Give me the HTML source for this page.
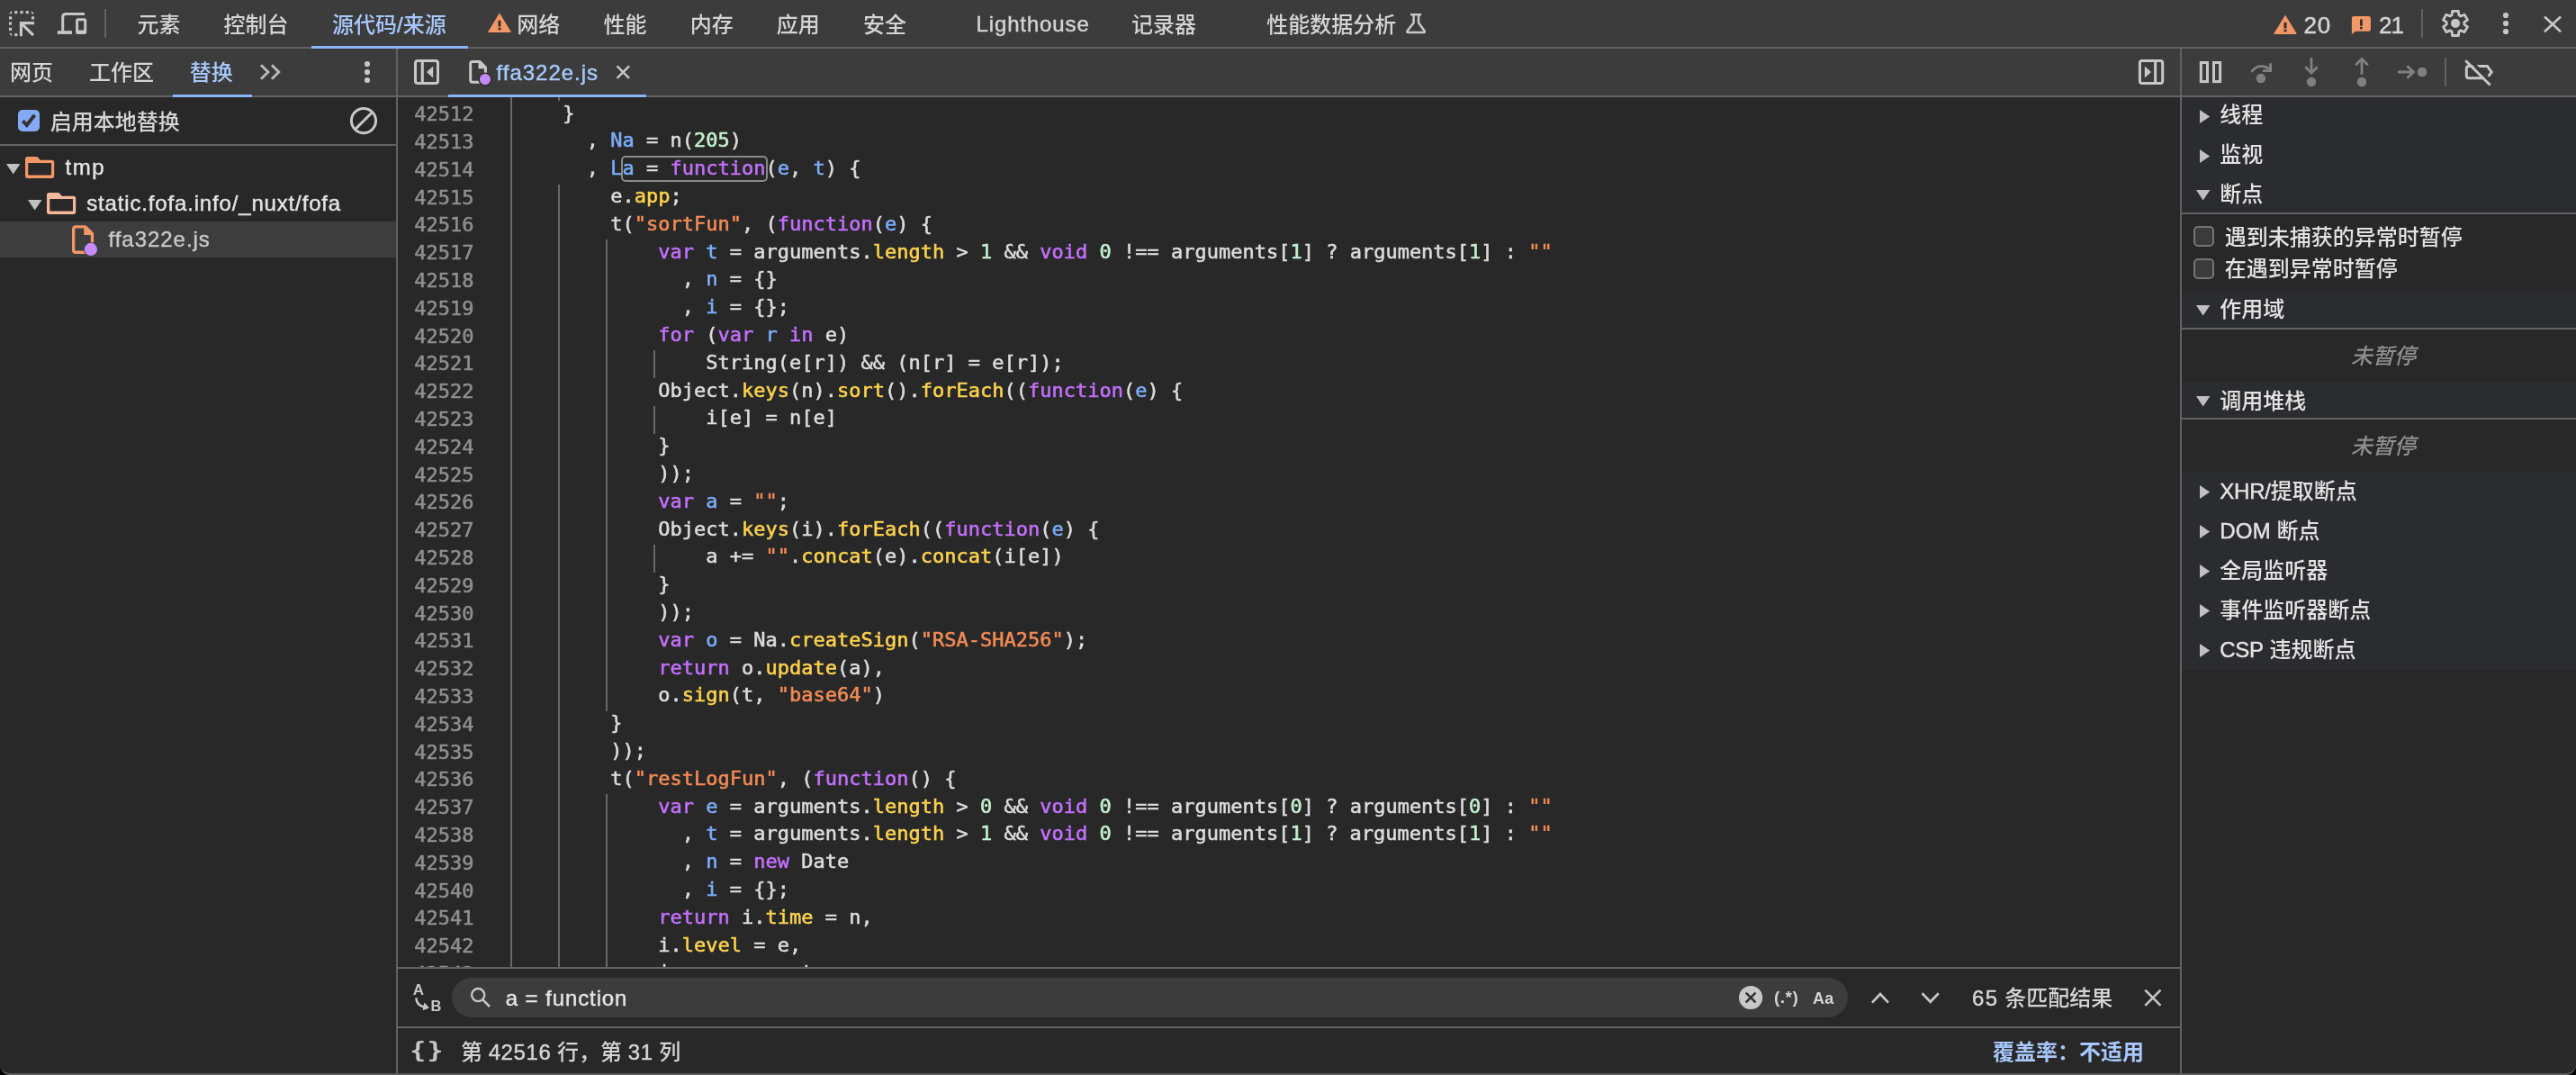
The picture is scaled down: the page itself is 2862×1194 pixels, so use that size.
<!DOCTYPE html>
<html lang="zh-CN">
<head>
<meta charset="utf-8">
<title>DevTools</title>
<style>
html,body{margin:0;padding:0;background:#000;}
body{width:2862px;height:1194px;overflow:hidden;position:relative;
  font-family:"Liberation Sans","Noto Sans CJK SC",sans-serif;font-size:24px;font-weight:500;color:#e3e3e3;
  -webkit-font-smoothing:antialiased;}
#app{will-change:transform;position:absolute;left:0;top:0;width:2862px;height:1192px;background:#282828;overflow:hidden;
  border-bottom:2px solid #5a5a5a;border-radius:0 0 11px 11px;}
.abs{position:absolute;}
.t{position:absolute;white-space:pre;line-height:32px;height:32px;}
.sub{color:#d4d4d4;}
.blue{color:#a8c7fa;}
.lat{letter-spacing:0.75px;-webkit-text-stroke:0.45px;}
.bar{position:absolute;left:0;width:2862px;background:#3c3c3c;}
.hl{position:absolute;height:2px;background:#626262;}
.vl{position:absolute;width:2px;background:#626262;}
.ul{position:absolute;background:#8ab4f8;height:3px;}
svg{position:absolute;overflow:visible;}
/* code */
#ed{position:absolute;left:442px;top:108px;width:1980px;height:966px;overflow:hidden;background:#282828;}
#edin{position:absolute;left:-442px;top:-108px;width:2862px;height:1194px;
  font-family:"DejaVu Sans Mono","Liberation Mono",monospace;font-size:22px;line-height:30.8px;font-weight:400;-webkit-text-stroke:0.55px;}
.ln{position:absolute;left:442px;width:84.5px;text-align:right;color:#8f8f8f;height:30.8px;white-space:pre;}
.cl{position:absolute;left:572.4px;height:30.8px;white-space:pre;color:#dcdcdc;}
.g{position:absolute;width:2px;height:30.8px;background:#686868;}
.k{color:#c270fb;}
.d{color:#7cacf8;}
.p{color:#fcd24c;}
.s{color:#f28b54;}
.n{color:#c4eed0;}
#gut{position:absolute;left:567px;top:108px;width:2px;height:966px;background:#686868;}
#match{position:absolute;left:689.6px;top:173px;width:159px;height:25px;border:2px solid #8a8a8a;border-radius:5px;}
/* right panel */
.hdr{position:absolute;left:2424px;width:438px;background:#2b2c2f;}
</style>
</head>
<body>
<div id="app">
<div class="bar" style="top:0;height:52px"></div>
<div class="hl" style="left:0;top:52px;width:2862px"></div>
<div class="bar" style="top:54px;height:52px"></div>
<div class="hl" style="left:0;top:106px;width:2862px"></div>
<svg style="left:8px;top:10px" width="32" height="32" viewBox="8 10 32 32" ><g fill="#c7c7c7"><path d="M13.1 12.1V15.2H10.0Z"/><rect x="16.25" y="12.10" width="3.1" height="3.1"/><rect x="22.50" y="12.10" width="3.1" height="3.1"/><rect x="28.75" y="12.10" width="3.1" height="3.1"/><path d="M35.0 12.1V15.2H38.1Z"/><rect x="10.00" y="18.35" width="3.1" height="3.1"/><rect x="10.00" y="24.60" width="3.1" height="3.1"/><rect x="10.00" y="30.85" width="3.1" height="3.1"/><path d="M10.0 37.1H13.1V40.2Z"/><rect x="35.00" y="18.35" width="3.1" height="3.1"/><rect x="16.25" y="37.10" width="3.1" height="3.1"/></g><path d="M38.1 25.6H23.4V40.2" fill="none" stroke="#c7c7c7" stroke-width="3.1"/><path d="M23.6 25.8L37 39.2" fill="none" stroke="#c7c7c7" stroke-width="3.1"/></svg>
<svg style="left:62px;top:12px" width="36" height="28" viewBox="62 12 36 28" ><path d="M94 15.5H73.2Q69.7 15.5 69.7 19V34.5" fill="none" stroke="#c7c7c7" stroke-width="3"/><rect x="63.9" y="34.2" width="16.1" height="3.7" fill="#c7c7c7"/><path d="M86.6 20.2H93.7Q96.2 20.2 96.2 22.7V35.6Q96.2 38.1 93.7 38.1H86.6Q84.1 38.1 84.1 35.6V22.7Q84.1 20.2 86.6 20.2ZM87.1 23.3V33.6H93.2V23.3Z" fill="#c7c7c7" fill-rule="evenodd"/></svg>
<div class="vl" style="left:116px;top:10px;height:32px"></div>
<div class="t sub" style="left:152.5px;top:11.7px;">元素</div>
<div class="t sub" style="left:248.5px;top:11.7px;">控制台</div>
<div class="t blue" style="left:369px;top:11.7px;">源代码<span class="lat" style="letter-spacing:0px">/</span>来源</div>
<div class="ul" style="left:346px;top:51px;width:174px"></div>
<svg style="left:540px;top:12px" width="30" height="28" viewBox="540 12 30 28" ><path d="M555 15.6L567.2 35.5H542.8Z" fill="#f29766" stroke="#f29766" stroke-width="1.2" stroke-linejoin="round"/><rect x="553.5" y="22.76" width="3" height="6.77" fill="#3a3030"/><rect x="553.5" y="30.72" width="3" height="2.7" fill="#3a3030"/></svg>
<div class="t sub" style="left:574.3px;top:11.7px;">网络</div>
<div class="t sub" style="left:670.5px;top:11.7px;">性能</div>
<div class="t sub" style="left:766.8px;top:11.7px;">内存</div>
<div class="t sub" style="left:862.7px;top:11.7px;">应用</div>
<div class="t sub" style="left:959px;top:11.7px;">安全</div>
<div class="t sub" style="left:1084.5px;top:10.7px;"><span class="lat" style="letter-spacing:0.87px">Lighthouse</span></div>
<div class="t sub" style="left:1257px;top:11.7px;">记录器</div>
<div class="t sub" style="left:1407.3px;top:11.7px;">性能数据分析</div>
<svg style="left:1560px;top:12px" width="26" height="28" viewBox="1560 12 26 28" ><path d="M1567 16.2H1579.1" fill="none" stroke="#c7c7c7" stroke-width="2.5"/><path d="M1570.6 16.5V25.2L1563.6 34.3Q1562.4 36.1 1564.6 36.1H1581.5Q1583.7 36.1 1582.5 34.3L1576.1 25.2V16.5" fill="none" stroke="#c7c7c7" stroke-width="2.5" stroke-linejoin="round"/></svg>
<svg style="left:2524px;top:14px" width="30" height="28" viewBox="2524 14 30 28" ><path d="M2539 17.7L2551 37.4H2527Z" fill="#f29766" stroke="#f29766" stroke-width="1.2" stroke-linejoin="round"/><rect x="2537.5" y="24.79" width="3" height="6.70" fill="#3a3030"/><rect x="2537.5" y="32.67" width="3" height="2.7" fill="#3a3030"/></svg>
<div class="t sub" style="left:2559.6px;top:11.9px;font-size:26px"><span class="lat" style="letter-spacing:0.6px">20</span></div>
<svg style="left:2610px;top:16px" width="26" height="24" viewBox="2610 16 26 24" ><path d="M2615.2 18H2631.6Q2633.9 18 2633.9 20.3V32.4Q2633.9 34.7 2631.6 34.7H2617L2612.9 38.2V20.3Q2612.9 18 2615.2 18Z" fill="#f29766"/><rect x="2622" y="21.4" width="2.8" height="7.4" fill="#3a3030"/><rect x="2622" y="29.9" width="2.8" height="2.4" fill="#3a3030"/></svg>
<div class="t sub" style="left:2643px;top:11.9px;font-size:26px"><span class="lat" style="letter-spacing:-1px">21</span></div>
<div class="vl" style="left:2690px;top:10px;height:32px"></div>
<svg style="left:2710px;top:8px" width="36" height="36" viewBox="2710 8 36 36" ><path d="M2731.87 16.79L2731.39 12.32L2724.61 12.32L2724.13 16.79L2722.04 17.99L2717.93 16.17L2714.54 22.04L2718.17 24.69L2718.17 27.11L2714.54 29.76L2717.93 35.63L2722.04 33.81L2724.13 35.01L2724.61 39.48L2731.39 39.48L2731.87 35.01L2733.96 33.81L2738.07 35.63L2741.46 29.76L2737.83 27.11L2737.83 24.69L2741.46 22.04L2738.07 16.17L2733.96 17.99Z" fill="none" stroke="#c7c7c7" stroke-width="2.8" stroke-linejoin="round"/><circle cx="2728" cy="25.9" r="5" fill="#c7c7c7"/></svg>
<svg style="left:2778px;top:12px" width="12" height="28" viewBox="2778 12 12 28" ><circle cx="2784" cy="17" r="3.1" fill="#c7c7c7"/><circle cx="2784" cy="26" r="3.1" fill="#c7c7c7"/><circle cx="2784" cy="35" r="3.1" fill="#c7c7c7"/></svg>
<svg style="left:2822px;top:14px" width="28" height="26" viewBox="2822 14 28 26" ><path d="M2827 18.5L2845 35.3M2845 18.5L2827 35.3" stroke="#c7c7c7" stroke-width="2.6" fill="none"/></svg>
<div class="t sub" style="left:11px;top:64.7px;">网页</div>
<div class="t sub" style="left:99px;top:64.7px;">工作区</div>
<div class="t blue" style="left:210.7px;top:64.7px;">替换</div>
<div class="ul" style="left:192px;top:105px;width:88px"></div>
<svg style="left:286px;top:68px" width="28" height="24" viewBox="286 68 28 24" ><path d="M290 72.2L297.9 80L290 87.8M301.9 72.2L309.8 80L301.9 87.8" fill="none" stroke="#bdbdbd" stroke-width="2.8"/></svg>
<svg style="left:402px;top:66px" width="12" height="28" viewBox="402 66 12 28" ><circle cx="408" cy="71.1" r="3.1" fill="#c7c7c7"/><circle cx="408" cy="80.1" r="3.1" fill="#c7c7c7"/><circle cx="408" cy="89" r="3.1" fill="#c7c7c7"/></svg>
<svg style="left:458px;top:64px" width="32" height="32" viewBox="458 64 32 32" ><rect x="461.5" y="67.4" width="25" height="25.1" rx="2.6" fill="none" stroke="#c7c7c7" stroke-width="3"/><rect x="467.7" y="67" width="3.1" height="26" fill="#c7c7c7"/><path d="M474 80L481.2 73.6V86.5Z" fill="#c7c7c7"/></svg>
<svg style="left:519px;top:64px" width="30" height="34" viewBox="519 64 30 34" ><path d="M533.0000000000001 68.4H524.9000000000001Q522.7 68.4 522.7 70.60000000000001V89.10000000000001Q522.7 91.30000000000001 524.9000000000001 91.30000000000001H537.2Q539.4000000000001 91.30000000000001 539.4000000000001 89.10000000000001V74.80000000000001Z" fill="none" stroke="#c7c7c7" stroke-width="3.0" stroke-linejoin="round"/><path d="M531.5000000000001 67.30000000000001L540.5000000000001 76.30000000000001H531.5000000000001Z" fill="#c7c7c7"/><circle cx="539" cy="88.1" r="7.7" fill="#2e2e2e"/><circle cx="539" cy="88.1" r="6.1" fill="#c58af9"/></svg>
<div class="t blue" style="left:551.6px;top:64.7px;"><span class="lat" style="letter-spacing:0.97px">ffa322e.js</span></div>
<svg style="left:682px;top:70px" width="22" height="22" viewBox="682 70 22 22" ><path d="M685.5999999999999 73.39999999999999L699.0 86.8M699.0 73.39999999999999L685.5999999999999 86.8" stroke="#c7c7c7" stroke-width="2.5" fill="none"/></svg>
<div class="ul" style="left:498px;top:105px;width:219.5px"></div>
<svg style="left:2374px;top:64px" width="32" height="32" viewBox="2374 64 32 32" ><rect x="2377.4" y="67.4" width="25.3" height="25.1" rx="2.6" fill="none" stroke="#c7c7c7" stroke-width="3"/><rect x="2393.1" y="67" width="3.1" height="26" fill="#c7c7c7"/><path d="M2390 80L2382.8 73.6V86.5Z" fill="#c7c7c7"/></svg>
<svg style="left:2442px;top:66px" width="28" height="28" viewBox="2442 66 28 28" ><rect x="2445.3" y="69.5" width="7.2" height="21.1" fill="none" stroke="#c7c7c7" stroke-width="3"/><rect x="2459.5" y="69.5" width="7.1" height="21.1" fill="none" stroke="#c7c7c7" stroke-width="3"/></svg>
<svg style="left:2498px;top:66px" width="28" height="28" viewBox="2498 66 28 28" ><path d="M2501.6 80A12.8 12.8 0 0 1 2522 77.6" fill="none" stroke="#808080" stroke-width="2.8"/><path d="M2522.6 70.2V78.6H2514" fill="none" stroke="#808080" stroke-width="2.8"/><circle cx="2511.9" cy="87" r="5.2" fill="#808080"/></svg>
<svg style="left:2558px;top:62px" width="20" height="36" viewBox="2558 62 20 36" ><path d="M2568 64.1V81M2561.3 74.3L2568 81L2574.7 74.3" fill="none" stroke="#808080" stroke-width="2.8"/><circle cx="2568" cy="91" r="5.2" fill="#808080"/></svg>
<svg style="left:2614px;top:62px" width="20" height="36" viewBox="2614 62 20 36" ><path d="M2624 82.7V65.6M2617.2 72.3L2624 65.5L2630.8 72.3" fill="none" stroke="#808080" stroke-width="2.8"/><circle cx="2624" cy="91" r="5.2" fill="#808080"/></svg>
<svg style="left:2662px;top:70px" width="36" height="20" viewBox="2662 70 36 20" ><path d="M2664 80H2681.5M2674.4 73.4L2681.5 80L2674.4 86.6" fill="none" stroke="#808080" stroke-width="2.8"/><circle cx="2691" cy="80" r="5.2" fill="#808080"/></svg>
<div class="vl" style="left:2716px;top:64px;height:32px"></div>
<svg style="left:2736px;top:64px" width="36" height="34" viewBox="2736 64 36 34" ><path d="M2744 73.4H2763.4L2768.2 80L2763.8 85.8" fill="none" stroke="#c7c7c7" stroke-width="3"/><path d="M2746 73.4H2743Q2740.3 73.4 2740.3 76.1V84Q2740.3 86.7 2743 86.7H2760" fill="none" stroke="#c7c7c7" stroke-width="3"/><path d="M2742.2 64.9L2769.8 92.5" stroke="#3c3c3c" stroke-width="3.6" fill="none"/><path d="M2739.3 67.2L2766.6 94.5" stroke="#c7c7c7" stroke-width="3" fill="none"/></svg>
<div class="vl" style="left:440px;top:54px;height:1138px"></div>
<div class="vl" style="left:2422px;top:54px;height:1138px"></div>
<div class="abs" style="left:20px;top:122px;width:24px;height:24px;border-radius:5px;background:#84aaf5"></div>
<svg style="left:20px;top:122px" width="24" height="24" viewBox="20 122 24 24" ><path d="M25.3 134.3L29.8 138.9L38.5 127.8" fill="none" stroke="#333" stroke-width="4"/></svg>
<div class="t sub" style="left:55.7px;top:119.7px;">启用本地替换</div>
<svg style="left:388px;top:118px" width="32" height="32" viewBox="388 118 32 32" ><circle cx="404" cy="134.1" r="13.6" fill="none" stroke="#c7c7c7" stroke-width="3"/><path d="M394.6 143.6L413.5 124.7" stroke="#c7c7c7" stroke-width="3"/></svg>
<div class="hl" style="left:0;top:160px;width:440px"></div>
<svg style="left:7.4px;top:181.5px" width="16" height="12" viewBox="0 0 16 12"><path d="M0 0H15.4L7.7 11.4Z" fill="#c0c0c0"/></svg>
<svg style="left:28px;top:174px" width="33" height="25" viewBox="0 0 33 25"><path d="M2.6 0H12.4Q13.6 0 14.4 0.9L16.8 3.7H29.6Q32.2 3.7 32.2 6.3V21.3Q32.2 23.9 29.6 23.9H2.6Q0 23.9 0 21.3V2.6Q0 0 2.6 0ZM3.3 7V20.6H29V7Z" fill="#f29766" fill-rule="evenodd"/></svg>
<div class="t " style="left:72.6px;top:170.2px;"><span class="lat" style="letter-spacing:1.5px">tmp</span></div>
<svg style="left:31.3px;top:221.5px" width="16" height="12" viewBox="0 0 16 12"><path d="M0 0H15.4L7.7 11.4Z" fill="#c0c0c0"/></svg>
<svg style="left:52px;top:214px" width="33" height="25" viewBox="0 0 33 25"><path d="M2.6 0H12.4Q13.6 0 14.4 0.9L16.8 3.7H29.6Q32.2 3.7 32.2 6.3V21.3Q32.2 23.9 29.6 23.9H2.6Q0 23.9 0 21.3V2.6Q0 0 2.6 0ZM3.3 7V20.6H29V7Z" fill="#f5b89b" fill-rule="evenodd"/></svg>
<div class="t " style="left:96.2px;top:210.0px;"><span class="lat" style="letter-spacing:0.84px">static.fofa.info/_nuxt/fofa</span></div>
<div class="abs" style="left:0;top:246px;width:440px;height:40px;background:#3d3d3d"></div>
<svg style="left:78px;top:248px" width="32" height="38" viewBox="78 248 32 38" ><path d="M94.85 251.85H84.25Q81.65 251.85 81.65 254.45V277.65Q81.65 280.25 84.25 280.25H99.85Q102.44999999999999 280.25 102.44999999999999 277.65V259.45Z" fill="none" stroke="#f29766" stroke-width="3.3" stroke-linejoin="round"/><path d="M93.19999999999999 250.6L103.69999999999999 261.09999999999997H93.19999999999999Z" fill="#f29766"/><circle cx="100.9" cy="276.9" r="8" fill="#3d3d3d"/><circle cx="100.9" cy="276.9" r="7.1" fill="#c58af9"/></svg>
<div class="t " style="left:120.5px;top:249.7px;color:#c7c7c7"><span class="lat" style="letter-spacing:0.97px">ffa322e.js</span></div>
<div id="ed"><div id="edin">
<i class="g" style="left:619.98px;top:81.45px"></i>
<i class="g" style="left:619.98px;top:204.65px"></i>
<i class="g" style="left:619.98px;top:235.45px"></i>
<i class="g" style="left:619.98px;top:266.25px"></i>
<i class="g" style="left:672.96px;top:266.25px"></i>
<i class="g" style="left:619.98px;top:297.05px"></i>
<i class="g" style="left:672.96px;top:297.05px"></i>
<i class="g" style="left:619.98px;top:327.85px"></i>
<i class="g" style="left:672.96px;top:327.85px"></i>
<i class="g" style="left:619.98px;top:358.65px"></i>
<i class="g" style="left:672.96px;top:358.65px"></i>
<i class="g" style="left:619.98px;top:389.45px"></i>
<i class="g" style="left:672.96px;top:389.45px"></i>
<i class="g" style="left:725.94px;top:389.45px"></i>
<i class="g" style="left:619.98px;top:420.25px"></i>
<i class="g" style="left:672.96px;top:420.25px"></i>
<i class="g" style="left:619.98px;top:451.05px"></i>
<i class="g" style="left:672.96px;top:451.05px"></i>
<i class="g" style="left:725.94px;top:451.05px"></i>
<i class="g" style="left:619.98px;top:481.85px"></i>
<i class="g" style="left:672.96px;top:481.85px"></i>
<i class="g" style="left:619.98px;top:512.65px"></i>
<i class="g" style="left:672.96px;top:512.65px"></i>
<i class="g" style="left:619.98px;top:543.45px"></i>
<i class="g" style="left:672.96px;top:543.45px"></i>
<i class="g" style="left:619.98px;top:574.25px"></i>
<i class="g" style="left:672.96px;top:574.25px"></i>
<i class="g" style="left:619.98px;top:605.05px"></i>
<i class="g" style="left:672.96px;top:605.05px"></i>
<i class="g" style="left:725.94px;top:605.05px"></i>
<i class="g" style="left:619.98px;top:635.85px"></i>
<i class="g" style="left:672.96px;top:635.85px"></i>
<i class="g" style="left:619.98px;top:666.65px"></i>
<i class="g" style="left:672.96px;top:666.65px"></i>
<i class="g" style="left:619.98px;top:697.45px"></i>
<i class="g" style="left:672.96px;top:697.45px"></i>
<i class="g" style="left:619.98px;top:728.25px"></i>
<i class="g" style="left:672.96px;top:728.25px"></i>
<i class="g" style="left:619.98px;top:759.05px"></i>
<i class="g" style="left:672.96px;top:759.05px"></i>
<i class="g" style="left:619.98px;top:789.85px"></i>
<i class="g" style="left:619.98px;top:820.65px"></i>
<i class="g" style="left:619.98px;top:851.45px"></i>
<i class="g" style="left:619.98px;top:882.25px"></i>
<i class="g" style="left:672.96px;top:882.25px"></i>
<i class="g" style="left:619.98px;top:913.05px"></i>
<i class="g" style="left:672.96px;top:913.05px"></i>
<i class="g" style="left:619.98px;top:943.85px"></i>
<i class="g" style="left:672.96px;top:943.85px"></i>
<i class="g" style="left:619.98px;top:974.65px"></i>
<i class="g" style="left:672.96px;top:974.65px"></i>
<i class="g" style="left:619.98px;top:1005.45px"></i>
<i class="g" style="left:672.96px;top:1005.45px"></i>
<i class="g" style="left:619.98px;top:1036.25px"></i>
<i class="g" style="left:672.96px;top:1036.25px"></i>
<i class="g" style="left:619.98px;top:1067.05px"></i>
<i class="g" style="left:672.96px;top:1067.05px"></i>
<div class="ln" style="top:112.25px">42512</div>
<div class="ln" style="top:143.05px">42513</div>
<div class="ln" style="top:173.85px">42514</div>
<div class="ln" style="top:204.65px">42515</div>
<div class="ln" style="top:235.45px">42516</div>
<div class="ln" style="top:266.25px">42517</div>
<div class="ln" style="top:297.05px">42518</div>
<div class="ln" style="top:327.85px">42519</div>
<div class="ln" style="top:358.65px">42520</div>
<div class="ln" style="top:389.45px">42521</div>
<div class="ln" style="top:420.25px">42522</div>
<div class="ln" style="top:451.05px">42523</div>
<div class="ln" style="top:481.85px">42524</div>
<div class="ln" style="top:512.65px">42525</div>
<div class="ln" style="top:543.45px">42526</div>
<div class="ln" style="top:574.25px">42527</div>
<div class="ln" style="top:605.05px">42528</div>
<div class="ln" style="top:635.85px">42529</div>
<div class="ln" style="top:666.65px">42530</div>
<div class="ln" style="top:697.45px">42531</div>
<div class="ln" style="top:728.25px">42532</div>
<div class="ln" style="top:759.05px">42533</div>
<div class="ln" style="top:789.85px">42534</div>
<div class="ln" style="top:820.65px">42535</div>
<div class="ln" style="top:851.45px">42536</div>
<div class="ln" style="top:882.25px">42537</div>
<div class="ln" style="top:913.05px">42538</div>
<div class="ln" style="top:943.85px">42539</div>
<div class="ln" style="top:974.65px">42540</div>
<div class="ln" style="top:1005.45px">42541</div>
<div class="ln" style="top:1036.25px">42542</div>
<div class="ln" style="top:1067.05px">42543</div>
<div class="cl" style="top:110.65px">    }</div>
<div class="cl" style="top:141.45px">      , <span class="d">Na</span> = n(<span class="n">205</span>)</div>
<div class="cl" style="top:172.25px">      , <span class="d">La</span> = <span class="k">function</span>(<span class="d">e</span>, <span class="d">t</span>) {</div>
<div class="cl" style="top:203.05px">        e.<span class="p">app</span>;</div>
<div class="cl" style="top:233.85px">        t(<span class="s">&quot;sortFun&quot;</span>, (<span class="k">function</span>(<span class="d">e</span>) {</div>
<div class="cl" style="top:264.65px">            <span class="k">var</span> <span class="d">t</span> = arguments.<span class="p">length</span> &gt; <span class="n">1</span> &amp;&amp; <span class="k">void</span> <span class="n">0</span> !== arguments[<span class="n">1</span>] ? arguments[<span class="n">1</span>] : <span class="s">&quot;&quot;</span></div>
<div class="cl" style="top:295.45px">              , <span class="d">n</span> = {}</div>
<div class="cl" style="top:326.25px">              , <span class="d">i</span> = {};</div>
<div class="cl" style="top:357.05px">            <span class="k">for</span> (<span class="k">var</span> <span class="d">r</span> <span class="k">in</span> e)</div>
<div class="cl" style="top:387.85px">                String(e[r]) &amp;&amp; (n[r] = e[r]);</div>
<div class="cl" style="top:418.65px">            Object.<span class="p">keys</span>(n).<span class="p">sort</span>().<span class="p">forEach</span>((<span class="k">function</span>(<span class="d">e</span>) {</div>
<div class="cl" style="top:449.45px">                i[e] = n[e]</div>
<div class="cl" style="top:480.25px">            }</div>
<div class="cl" style="top:511.05px">            ));</div>
<div class="cl" style="top:541.85px">            <span class="k">var</span> <span class="d">a</span> = <span class="s">&quot;&quot;</span>;</div>
<div class="cl" style="top:572.65px">            Object.<span class="p">keys</span>(i).<span class="p">forEach</span>((<span class="k">function</span>(<span class="d">e</span>) {</div>
<div class="cl" style="top:603.45px">                a += <span class="s">&quot;&quot;</span>.<span class="p">concat</span>(e).<span class="p">concat</span>(i[e])</div>
<div class="cl" style="top:634.25px">            }</div>
<div class="cl" style="top:665.05px">            ));</div>
<div class="cl" style="top:695.85px">            <span class="k">var</span> <span class="d">o</span> = Na.<span class="p">createSign</span>(<span class="s">&quot;RSA-SHA256&quot;</span>);</div>
<div class="cl" style="top:726.65px">            <span class="k">return</span> o.<span class="p">update</span>(a),</div>
<div class="cl" style="top:757.45px">            o.<span class="p">sign</span>(t, <span class="s">&quot;base</span><span class="s">64&quot;</span>)</div>
<div class="cl" style="top:788.25px">        }</div>
<div class="cl" style="top:819.05px">        ));</div>
<div class="cl" style="top:849.85px">        t(<span class="s">&quot;restLogFun&quot;</span>, (<span class="k">function</span>() {</div>
<div class="cl" style="top:880.65px">            <span class="k">var</span> <span class="d">e</span> = arguments.<span class="p">length</span> &gt; <span class="n">0</span> &amp;&amp; <span class="k">void</span> <span class="n">0</span> !== arguments[<span class="n">0</span>] ? arguments[<span class="n">0</span>] : <span class="s">&quot;&quot;</span></div>
<div class="cl" style="top:911.45px">              , <span class="d">t</span> = arguments.<span class="p">length</span> &gt; <span class="n">1</span> &amp;&amp; <span class="k">void</span> <span class="n">0</span> !== arguments[<span class="n">1</span>] ? arguments[<span class="n">1</span>] : <span class="s">&quot;&quot;</span></div>
<div class="cl" style="top:942.25px">              , <span class="d">n</span> = <span class="k">new</span> Date</div>
<div class="cl" style="top:973.05px">              , <span class="d">i</span> = {};</div>
<div class="cl" style="top:1003.85px">            <span class="k">return</span> i.<span class="p">time</span> = n,</div>
<div class="cl" style="top:1034.65px">            i.<span class="p">level</span> = e,</div>
<div class="cl" style="top:1065.45px">            i.<span class="p">message</span> = t,</div>
<div id="gut"></div>
<div id="match"></div>
</div></div>
<div class="hl" style="left:442px;top:1074px;width:1980px"></div>
<div class="hl" style="left:442px;top:1140px;width:1980px"></div>
<div class="abs" style="left:502px;top:1086px;width:1551px;height:44px;border-radius:22px;background:#3c3c3c"></div>
<svg style="left:456px;top:1090px" width="38" height="36" viewBox="456 1090 38 36" ><text x="458.8" y="1104.6" font-family="Liberation Sans,sans-serif" font-weight="bold" font-size="17" fill="#c7c7c7">A</text><text x="478.6" y="1122.8" font-family="Liberation Sans,sans-serif" font-weight="bold" font-size="16.5" fill="#c7c7c7">B</text><path d="M462.4 1108.4Q462.8 1117.6 473.6 1118.6" fill="none" stroke="#c7c7c7" stroke-width="2.4"/><path d="M471.4 1113.6L477 1119.4L469.6 1122.2Z" fill="#c7c7c7"/></svg>
<svg style="left:520px;top:1094px" width="28" height="28" viewBox="520 1094 28 28" ><circle cx="531.2" cy="1105.1" r="7.1" fill="none" stroke="#c7c7c7" stroke-width="2.3"/><path d="M536.4 1110.4L544 1118" stroke="#c7c7c7" stroke-width="2.5"/></svg>
<div class="t " style="left:561.8px;top:1092.7px;"><span class="lat" style="letter-spacing:0.9px">a = function</span></div>
<svg style="left:1930px;top:1094px" width="30" height="30" viewBox="1930 1094 30 30" ><circle cx="1945.1" cy="1108" r="13.1" fill="#c7c7c7"/><path d="M1939.6999999999998 1102.6L1950.5 1113.4M1950.5 1102.6L1939.6999999999998 1113.4" stroke="#333" stroke-width="2.6" fill="none"/></svg>
<div class="t sub" style="left:1971px;top:1092px;font-size:19px;font-weight:bold;letter-spacing:0.5px">(.*)</div>
<div class="t sub" style="left:2014px;top:1093px;font-size:18px;font-weight:bold;letter-spacing:0.3px">Aa</div>
<svg style="left:2076px;top:1098px" width="26" height="20" viewBox="2076 1098 26 20" ><path d="M2080 1113.6L2089 1104L2098 1113.6" fill="none" stroke="#c7c7c7" stroke-width="2.7"/></svg>
<svg style="left:2132px;top:1098px" width="26" height="20" viewBox="2132 1098 26 20" ><path d="M2135.6 1103.2L2144.7 1112.8L2153.8 1103.2" fill="none" stroke="#c7c7c7" stroke-width="2.7"/></svg>
<div class="t sub" style="left:2191px;top:1092.5px;"><span class="lat" style="letter-spacing:1.4px">65</span> 条匹配结果</div>
<svg style="left:2378px;top:1094px" width="28" height="28" viewBox="2378 1094 28 28" ><path d="M2383.3 1099.6000000000001L2400.5 1116.8M2400.5 1099.6000000000001L2383.3 1116.8" stroke="#c7c7c7" stroke-width="2.6" fill="none"/></svg>
<svg style="left:456px;top:1154px" width="36" height="28" viewBox="456 1154 36 28" ><text x="0" y="0" transform="translate(455.2 1175.2) scale(1.22 1)" font-family="DejaVu Sans Mono,Liberation Mono,monospace" font-weight="bold" font-size="24.5" fill="#c7c7c7">{</text><text x="0" y="0" transform="translate(474.6 1175.2) scale(1.22 1)" font-family="DejaVu Sans Mono,Liberation Mono,monospace" font-weight="bold" font-size="24.5" fill="#c7c7c7">}</text></svg>
<div class="t sub" style="left:512px;top:1152.7px;">第 <span class="lat" style="letter-spacing:0.6px">42516</span> 行，第 <span class="lat" style="letter-spacing:0.6px">31</span> 列</div>
<div class="t blue" style="left:2214px;top:1153.0px;font-weight:700">覆盖率：不适用</div>
<div class="hdr" style="top:108px;height:128px"></div>
<div class="hl" style="left:2424px;top:236px;width:438px"></div>
<svg style="left:2443.7px;top:121.99999999999999px" width="12" height="16" viewBox="0 0 12 16"><path d="M0 0L11.2 7.5L0 15Z" fill="#c0c0c0"/></svg>
<div class="t " style="left:2466.3px;top:112.2px;">线程</div>
<svg style="left:2443.7px;top:166.0px" width="12" height="16" viewBox="0 0 12 16"><path d="M0 0L11.2 7.5L0 15Z" fill="#c0c0c0"/></svg>
<div class="t " style="left:2466.3px;top:156.2px;">监视</div>
<svg style="left:2440.3px;top:210.7px" width="16" height="12" viewBox="0 0 16 12"><path d="M0 0H15.4L7.7 11.4Z" fill="#c0c0c0"/></svg>
<div class="t " style="left:2466.3px;top:200.2px;">断点</div>
<div class="abs" style="left:2436.5px;top:251px;width:19px;height:19px;border:2px solid #757575;border-radius:5px;background:#3b3b3b"></div>
<div class="t " style="left:2471.8px;top:247.7px;">遇到未捕获的异常时暂停</div>
<div class="abs" style="left:2436.5px;top:286.5px;width:19px;height:19px;border:2px solid #757575;border-radius:5px;background:#3b3b3b"></div>
<div class="t " style="left:2471.8px;top:283.4px;">在遇到异常时暂停</div>
<div class="hdr" style="top:324px;height:40px"></div>
<div class="hl" style="left:2424px;top:364px;width:438px"></div>
<svg style="left:2440.3px;top:338.7px" width="16" height="12" viewBox="0 0 16 12"><path d="M0 0H15.4L7.7 11.4Z" fill="#c0c0c0"/></svg>
<div class="t " style="left:2466.3px;top:328.2px;">作用域</div>
<div class="t " style="left:2612px;top:380.0px;font-style:italic;color:#8f8f8f">未暂停</div>
<div class="hdr" style="top:424px;height:40px"></div>
<div class="hl" style="left:2424px;top:464px;width:438px"></div>
<svg style="left:2440.3px;top:440.2px" width="16" height="12" viewBox="0 0 16 12"><path d="M0 0H15.4L7.7 11.4Z" fill="#c0c0c0"/></svg>
<div class="t " style="left:2466.3px;top:429.7px;">调用堆栈</div>
<div class="t " style="left:2612px;top:480.3px;font-style:italic;color:#8f8f8f">未暂停</div>
<div class="hdr" style="top:524px;height:220px"></div>
<svg style="left:2443.7px;top:538.7px" width="12" height="16" viewBox="0 0 12 16"><path d="M0 0L11.2 7.5L0 15Z" fill="#c0c0c0"/></svg>
<div class="t " style="left:2466.3px;top:530.0px;"><span class="lat" style="letter-spacing:-0.2px">XHR/</span>提取断点</div>
<svg style="left:2443.7px;top:582.7px" width="12" height="16" viewBox="0 0 12 16"><path d="M0 0L11.2 7.5L0 15Z" fill="#c0c0c0"/></svg>
<div class="t " style="left:2466.3px;top:574.0px;"><span class="lat" style="letter-spacing:0.2px">DOM</span> 断点</div>
<svg style="left:2443.7px;top:626.7px" width="12" height="16" viewBox="0 0 12 16"><path d="M0 0L11.2 7.5L0 15Z" fill="#c0c0c0"/></svg>
<div class="t " style="left:2466.3px;top:618.0px;">全局监听器</div>
<svg style="left:2443.7px;top:670.7px" width="12" height="16" viewBox="0 0 12 16"><path d="M0 0L11.2 7.5L0 15Z" fill="#c0c0c0"/></svg>
<div class="t " style="left:2466.3px;top:662.0px;">事件监听器断点</div>
<svg style="left:2443.7px;top:714.7px" width="12" height="16" viewBox="0 0 12 16"><path d="M0 0L11.2 7.5L0 15Z" fill="#c0c0c0"/></svg>
<div class="t " style="left:2466.3px;top:706.0px;"><span class="lat" style="letter-spacing:-0.3px">CSP</span> 违规断点</div>
</div>
</body>
</html>
